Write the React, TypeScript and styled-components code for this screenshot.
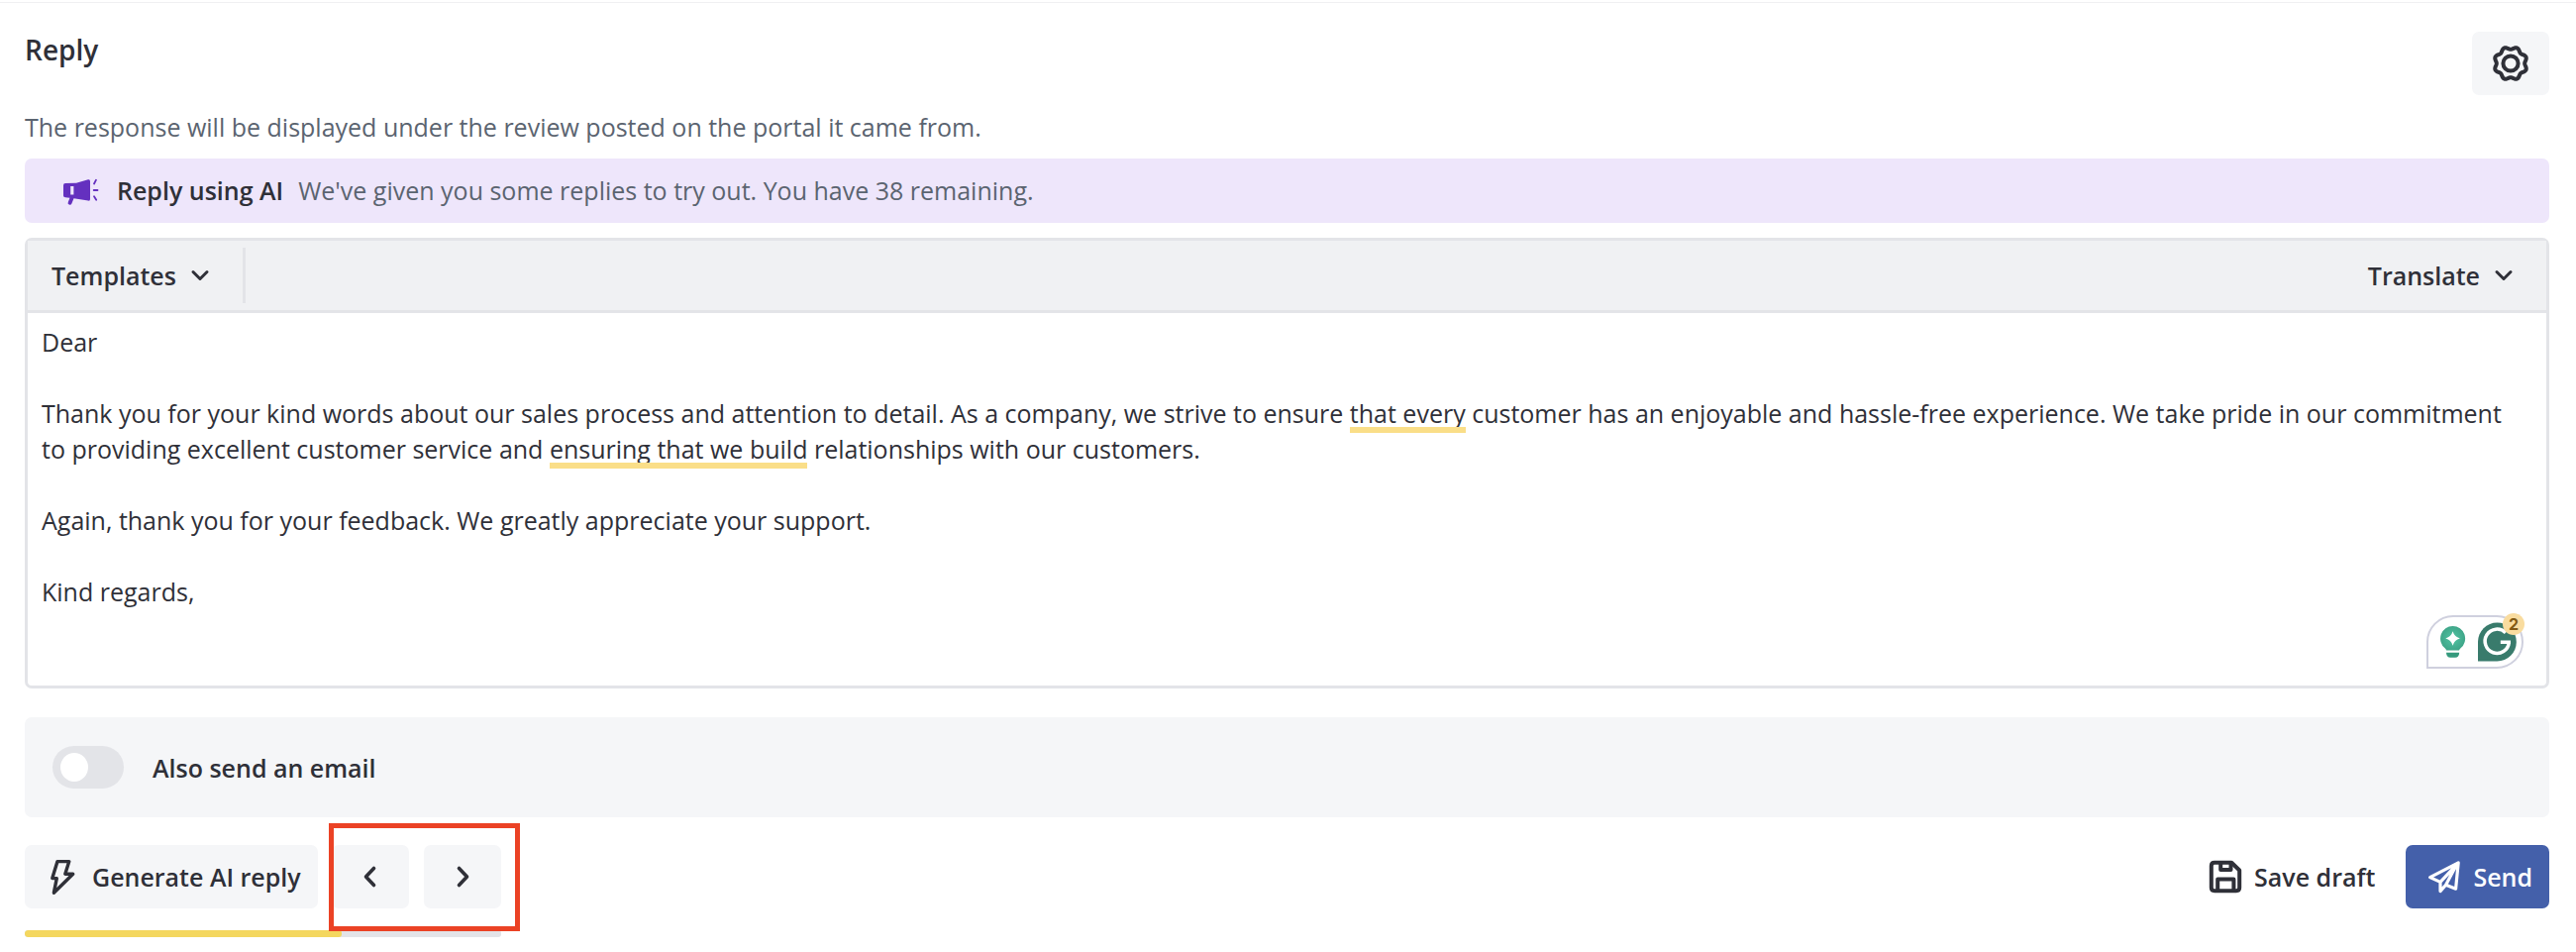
import React, { useState } from "react";
import styled, { createGlobalStyle } from "styled-components";

const GlobalStyle = createGlobalStyle`
  *, *::before, *::after { box-sizing: border-box; }
  body {
    margin: 0;
    background: #ffffff;
    color: #2f3038;
    font-family: "Open Sans", "Noto Sans", sans-serif;
    font-size: 25px;
    line-height: 36px;
  }
`;

const Page = styled.main`
  margin-top: 2px;
  border-top: 1px solid #f0f0f2;
  padding: 29px 27px 15px 25px;
`;

const Header = styled.header`
  display: flex;
  justify-content: space-between;
  align-items: flex-start;
  height: 78px;
`;

const Title = styled.h2`
  margin: 0;
  font-size: 28px;
  line-height: 36px;
  font-weight: 600;
`;

const Button = styled.button<{ $tone?: "plain" | "primary" }>`
  display: inline-flex;
  align-items: center;
  justify-content: center;
  gap: 12px;
  height: 64px;
  padding: 0 17px;
  border: 0;
  border-radius: 7px;
  background: ${(p) => (p.$tone === "primary" ? "#4460aa" : p.$tone === "plain" ? "transparent" : "#f5f6f8")};
  color: ${(p) => (p.$tone === "primary" ? "#ffffff" : "#2f3038")};
  font: inherit;
  font-weight: 600;
  white-space: nowrap;
  cursor: pointer;
  svg { flex: none; }
`;

const IconButton = styled(Button)`
  width: 78px;
  padding: 0;
`;

const GenerateButton = styled(Button)`
  padding: 0 17px 0 20px;
`;

const SendButton = styled(Button)`
  padding: 0 17px 0 22px;
`;

const Description = styled.p`
  margin: 0 0 14px;
  color: #5b6470;
`;

const Banner = styled.section`
  display: flex;
  align-items: center;
  min-height: 65px;
  padding: 0 38px 2px;
  border-radius: 7px;
  background: #eee6fb;
  strong {
    margin: 0 15px 0 18px;
    font-weight: 600;
  }
  span { color: #5b6470; }
`;

const Editor = styled.section`
  position: relative;
  margin-top: 15px;
  border: 3px solid #e3e4e8;
  border-radius: 7px;
`;

const Toolbar = styled.div`
  display: flex;
  align-items: center;
  justify-content: space-between;
  height: 73px;
  padding: 0 16px 0 0;
  border-bottom: 3px solid #e3e4e8;
  background: #f0f1f3;
`;

const ToolbarGroup = styled.div`
  display: flex;
  align-items: center;
  height: 56px;
  padding-right: 16px;
  border-right: 3px solid #e3e4e8;
`;

const MenuButton = styled.button`
  display: inline-flex;
  align-items: center;
  gap: 12px;
  padding: 0 15px 0 24px;
  border: 0;
  background: none;
  color: inherit;
  font: inherit;
  font-weight: 600;
  cursor: pointer;
`;

const Message = styled.div`
  min-height: 376px;
  padding: 11px 22px 11px 14px;
  white-space: pre-wrap;
  outline: none;
`;

const Hint = styled.span`
  position: relative;
  &::after {
    content: "";
    position: absolute;
    left: 0;
    right: 0;
    bottom: -3px;
    height: 6px;
    background: #fade88;
  }
`;

const Assistant = styled.div`
  position: absolute;
  right: 23px;
  bottom: 17px;
  display: flex;
  align-items: center;
  gap: 12px;
  width: 98px;
  height: 54px;
  padding: 0 5px 0 11px;
  border: 2px solid #cfd0de;
  border-radius: 27px 27px 27px 0;
  background: #ffffff;
`;

const AssistantCount = styled.span`
  position: absolute;
  top: -4px;
  right: -3px;
  width: 22px;
  height: 22px;
  border-radius: 50%;
  background: #f9dc9f;
  color: #835a14;
  font-family: Inter, sans-serif;
  font-size: 16px;
  font-weight: 700;
  line-height: 22px;
  text-align: center;
`;

const EmailRow = styled.label`
  display: flex;
  align-items: center;
  gap: 29px;
  min-height: 101px;
  margin-top: 29px;
  padding: 0 28px;
  border-radius: 7px;
  background: #f5f6f8;
  font-weight: 600;
`;

const Toggle = styled.input`
  appearance: none;
  display: flex;
  align-items: center;
  width: 72px;
  height: 43px;
  margin: 0;
  padding: 0 8px;
  border-radius: 22px;
  background: #e3e4e8;
  cursor: pointer;
  &::before {
    content: "";
    width: 28px;
    height: 29px;
    border-radius: 50%;
    background: #ffffff;
  }
  &:checked {
    justify-content: flex-end;
    background: #4460aa;
  }
`;

const Footer = styled.footer`
  display: flex;
  justify-content: space-between;
  align-items: flex-start;
  margin-top: 28px;
`;

const Generator = styled.div`
  display: flex;
  flex-direction: column;
  gap: 22px;
`;

const Actions = styled.div`
  display: flex;
  gap: 14px;
`;

const Pager = styled.nav`
  position: relative;
  display: flex;
  gap: 15px;
  &::after {
    content: "";
    position: absolute;
    z-index: 1;
    inset: -22px -19px -23px -3px;
    border: 5px solid #eb4225;
    pointer-events: none;
  }
`;

const Progress = styled.div`
  height: 7px;
  border-radius: 3px;
  background: #e3e4e8;
  overflow: hidden;
`;

const ProgressFill = styled.div`
  height: 100%;
  border-radius: 3px;
  background: #f4d75f;
`;

const scallops = (() => {
  const points: string[] = [];
  for (let i = 0; i <= 160; i++) {
    const a = (i / 160) * Math.PI * 2;
    const r = 15.5 - 1.3 * Math.cos(8 * a);
    points.push(`${(19 + r * Math.cos(a)).toFixed(2)} ${(19 + r * Math.sin(a)).toFixed(2)}`);
  }
  return `M${points.join("L")}Z`;
})();

const GearIcon = () => (
  <svg width="38" height="38" viewBox="0 0 38 38" fill="none" stroke="currentColor" strokeWidth="4" strokeLinejoin="round" aria-hidden="true">
    <path d={scallops} />
    <circle cx="19" cy="19" r="7.6" />
  </svg>
);

const MegaphoneIcon = () => (
  <svg width="37" height="33" viewBox="0 -5 37 33" aria-hidden="true">
    <path fill="#6430bf" fillRule="evenodd" d="M3 5 14 4.8 26 1.3Q28 .8 28 3V21Q28 23.2 26 22.6L11.5 20.2 9.4 25.4Q8.6 27.2 6.8 26.5 5 26 5.8 24L7.5 19.8 3 19.3Q1 19.2 1 17.5V7Q1 5 3 5ZM8.2 8V16.5H11.4V8Z" />
    <path fill="none" stroke="#6430bf" strokeWidth="1.8" strokeLinecap="round" d="m32 5.5 2-3.8M31.7 12H35.5M32 18.2l2.2 3.6" />
  </svg>
);

const Chevron = () => (
  <svg width="24" height="24" viewBox="0 0 24 24" fill="none" stroke="currentColor" strokeWidth="3" strokeLinecap="round" strokeLinejoin="round" aria-hidden="true">
    <path d="m5 8.5 7 7 7-7" />
  </svg>
);

const PagerChevron = ({ d }: { d: string }) => (
  <svg width="24" height="24" viewBox="0 0 24 24" fill="none" stroke="currentColor" strokeWidth="3.6" strokeLinecap="round" strokeLinejoin="round" aria-hidden="true">
    <path d={d} />
  </svg>
);

const BoltIcon = () => (
  <svg width="36" height="38" viewBox="0 0 36 38" fill="none" stroke="currentColor" strokeWidth="3.4" strokeLinejoin="round" aria-hidden="true">
    <path d="M13 3.6H24.8L20.8 16.2H28.7L9.4 35.2 12.3 20.6H7.8Z" />
  </svg>
);

const SaveIcon = () => (
  <svg width="34" height="34" viewBox="0 0 34 34" fill="none" stroke="currentColor" strokeWidth="4" strokeLinejoin="round" aria-hidden="true">
    <path d="M6 2.8H23.2L31.2 10.5V28Q31.2 31.2 28 31.2H6Q2.8 31.2 2.8 28V6Q2.8 2.8 6 2.8Z" />
    <path d="M12.2 3V10H22.5V3M9.2 31V19.5H25.4V31" />
  </svg>
);

const SendIcon = () => (
  <svg width="34" height="34" viewBox="0 0 34 34" fill="none" stroke="currentColor" strokeWidth="3.2" strokeLinejoin="round" strokeLinecap="round" aria-hidden="true">
    <path d="M31.2 2.8 2.6 17.6 13 22.4V31.6L18.6 25.2 28.6 29.2ZM13 22.4 29.5 4.8 18.6 25.2" />
  </svg>
);

const BulbIcon = () => (
  <svg width="28" height="36" viewBox="0 0 28 36" aria-hidden="true">
    <defs>
      <radialGradient id="bulb">
        <stop offset="0" stopColor="#52c4a4" />
        <stop offset="1" stopColor="#3fa689" />
      </radialGradient>
    </defs>
    <path fill="url(#bulb)" d="M14 1.5A13 13 0 0 0 5.8 24.5Q7.2 26 7.4 26.8H20.6Q20.8 26 22.2 24.5A13 13 0 0 0 14 1.5Z" />
    <path fill="#359a7d" d="M7.2 29H20.8Q20.5 34.3 16.5 34.3H11.5Q7.5 34.3 7.2 29Z" />
    <path fill="#fff" d="M14 7Q15.6 12.7 21.5 14.4 15.6 16 14 21.8 12.4 16 6.5 14.4 12.4 12.7 14 7Z" />
  </svg>
);

const GrammarIcon = () => (
  <svg width="40" height="40" viewBox="0 0 40 40" aria-hidden="true">
    <path fill="#397b6c" d="M0 40V20A20 20 0 1 1 20 40Z" />
    <path fill="none" stroke="#fff" strokeWidth="3.6" d="M28.8 10.5A12.5 12.5 0 1 0 32.3 20.5M23.5 20.3H34" />
  </svg>
);

export default function App() {
  const [alsoEmail, setAlsoEmail] = useState(false);
  const used = 320;
  const total = 481;

  return (
    <>
      <GlobalStyle />
      <Page>
        <Header>
          <Title>Reply</Title>
          <IconButton type="button" aria-label="Reply settings"><GearIcon /></IconButton>
        </Header>
        <Description>The response will be displayed under the review posted on the portal it came from.</Description>
        <Banner>
          <MegaphoneIcon />
          <strong>Reply using AI</strong>
          <span>We've given you some replies to try out. You have 38 remaining.</span>
        </Banner>
        <Editor>
          <Toolbar>
            <ToolbarGroup>
              <MenuButton type="button" aria-haspopup="menu">Templates<Chevron /></MenuButton>
            </ToolbarGroup>
            <MenuButton type="button" aria-haspopup="menu">Translate<Chevron /></MenuButton>
          </Toolbar>
          <Message role="textbox" aria-multiline="true" aria-label="Reply" contentEditable suppressContentEditableWarning spellCheck={false}>
            {"Dear\n\nThank you for your kind words about our sales process and attention to detail. As a company, we strive to ensure "}
            <Hint>that every</Hint>
            {" customer has an enjoyable and hassle-free experience. We take pride in our commitment to providing excellent customer service and "}
            <Hint>ensuring that we build</Hint>
            {" relationships with our customers.\n\nAgain, thank you for your feedback. We greatly appreciate your support.\n\nKind regards,"}
          </Message>
          <Assistant>
            <BulbIcon />
            <GrammarIcon />
            <AssistantCount>2</AssistantCount>
          </Assistant>
        </Editor>
        <EmailRow>
          <Toggle type="checkbox" role="switch" checked={alsoEmail} onChange={(e) => setAlsoEmail(e.target.checked)} />
          Also send an email
        </EmailRow>
        <Footer>
          <Generator>
            <Actions>
              <GenerateButton type="button"><BoltIcon />Generate AI reply</GenerateButton>
              <Pager aria-label="Suggested replies">
                <IconButton type="button" aria-label="Previous reply"><PagerChevron d="m15.5 3.5-8 8.5 8 8.5" /></IconButton>
                <IconButton type="button" aria-label="Next reply"><PagerChevron d="m8.5 3.5 8 8.5-8 8.5" /></IconButton>
              </Pager>
            </Actions>
            <Progress role="progressbar" aria-label="AI replies used" aria-valuenow={used} aria-valuemax={total}>
              <ProgressFill style={{ width: `${(used / total) * 100}%` }} />
            </Progress>
          </Generator>
          <Actions>
            <Button type="button" $tone="plain"><SaveIcon />Save draft</Button>
            <SendButton type="button" $tone="primary"><SendIcon />Send</SendButton>
          </Actions>
        </Footer>
      </Page>
    </>
  );
}
